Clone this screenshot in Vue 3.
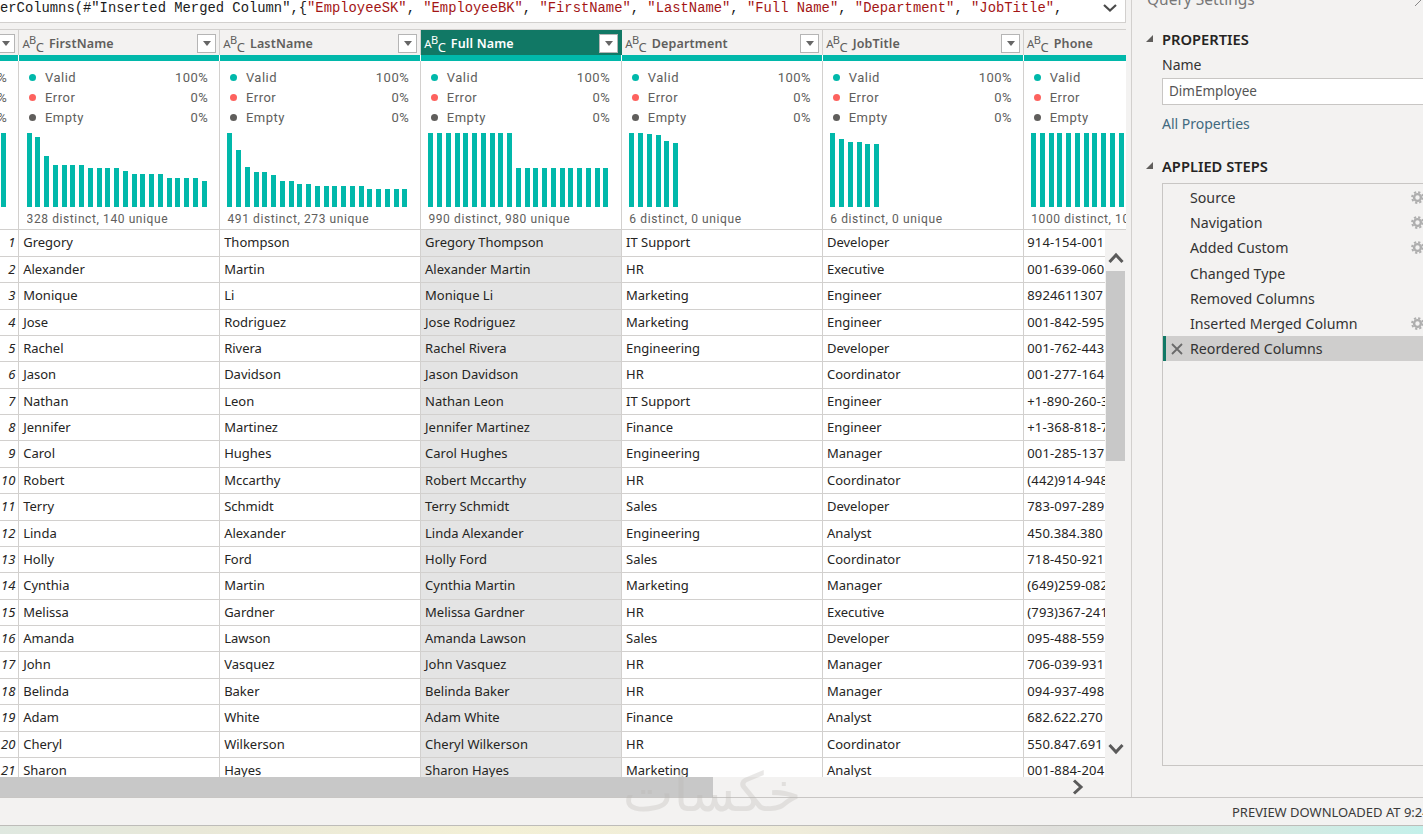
<script setup>
const repeat = (n, v) => Array(n).fill(v)
const columns = [
  { name: 'Prev', bars: repeat(21, 74), foot: '1000 distinct, 1000 unique', hidden: true },
  { name: 'FirstName', bars: [74,70,51,42,42,42,42,39,39,39,39,36,33,33,33,33,29,29,29,29,26], foot: '328 distinct, 140 unique' },
  { name: 'LastName', bars: [74,57,40,35,35,32,26,26,23,23,21,21,21,21,21,21,18,18,18,18,18], foot: '491 distinct, 273 unique' },
  { name: 'Full Name', bars: [...repeat(10, 74), ...repeat(11, 39)], foot: '990 distinct, 980 unique', selected: true },
  { name: 'Department', bars: [74,74,73,72,66,64], foot: '6 distinct, 0 unique' },
  { name: 'JobTitle', bars: [74,68,65,65,63,63], foot: '6 distinct, 0 unique' },
  { name: 'Phone', bars: repeat(21, 74), foot: '1000 distinct, 1000 unique', last: true }
]
const legend = [
  { label: 'Valid', value: '100%', color: '#01b8aa' },
  { label: 'Error', value: '0%', color: '#fd625e' },
  { label: 'Empty', value: '0%', color: '#605e5c' }
]
const rows = [
  ['Gregory','Thompson','IT Support','Developer','914-154-001'],
  ['Alexander','Martin','HR','Executive','001-639-060'],
  ['Monique','Li','Marketing','Engineer','8924611307'],
  ['Jose','Rodriguez','Marketing','Engineer','001-842-595'],
  ['Rachel','Rivera','Engineering','Developer','001-762-443'],
  ['Jason','Davidson','HR','Coordinator','001-277-164'],
  ['Nathan','Leon','IT Support','Engineer','+1-890-260-3'],
  ['Jennifer','Martinez','Finance','Engineer','+1-368-818-7'],
  ['Carol','Hughes','Engineering','Manager','001-285-137'],
  ['Robert','Mccarthy','HR','Coordinator','(442)914-948'],
  ['Terry','Schmidt','Sales','Developer','783-097-289'],
  ['Linda','Alexander','Engineering','Analyst','450.384.380'],
  ['Holly','Ford','Sales','Coordinator','718-450-921'],
  ['Cynthia','Martin','Marketing','Manager','(649)259-082'],
  ['Melissa','Gardner','HR','Executive','(793)367-241'],
  ['Amanda','Lawson','Sales','Developer','095-488-559'],
  ['John','Vasquez','HR','Manager','706-039-931'],
  ['Belinda','Baker','HR','Manager','094-937-498'],
  ['Adam','White','Finance','Analyst','682.622.270'],
  ['Cheryl','Wilkerson','HR','Coordinator','550.847.691'],
  ['Sharon','Hayes','Marketing','Analyst','001-884-204']
]
const steps = [
  { name: 'Source', gear: true },
  { name: 'Navigation', gear: true },
  { name: 'Added Custom', gear: true },
  { name: 'Changed Type' },
  { name: 'Removed Columns' },
  { name: 'Inserted Merged Column', gear: true },
  { name: 'Reordered Columns', active: true }
]
</script>

<template>
  <div class="app">
    <div class="main">
      <section class="left">
        <div class="formula">
          <code class="code">erColumns(#"Inserted Merged Column",{<b>"EmployeeSK"</b>, <b>"EmployeeBK"</b>, <b>"FirstName"</b>, <b>"LastName"</b>, <b>"Full Name"</b>, <b>"Department"</b>, <b>"JobTitle"</b>,</code>
          <svg class="formula-chev" width="16" height="10" viewBox="0 0 16 10"><path d="M2 2l6 5.5L14 2" fill="none" stroke="#4a4a4a" stroke-width="2.2"/></svg>
        </div>

        <div class="table">
          <div class="head cols">
            <div v-for="c in columns" :key="c.name" class="hcell" :class="{ sel: c.selected }">
              <span v-if="!c.hidden" class="abc"><i>A</i><i class="b">B</i><i class="c">C</i></span>
              <span v-if="!c.hidden" class="hname">{{ c.name }}</span>
              <span v-if="!c.last" class="drop"><span class="tri"></span></span>
            </div>
          </div>
          <div class="stripes cols">
            <div v-for="c in columns" :key="c.name" class="stripe"></div>
          </div>
          <div class="profile cols">
            <div v-for="c in columns" :key="c.name" class="pcell">
              <div class="legend">
                <div v-for="l in legend" :key="l.label" class="lrow">
                  <span class="dot" :style="{ background: l.color }"></span>
                  <span class="lname">{{ l.label }}</span>
                  <span class="lval">{{ l.value }}</span>
                </div>
              </div>
              <div class="bars">
                <span v-for="(h, i) in c.bars" :key="i" class="bar" :style="{ height: h + 'px' }"></span>
              </div>
              <div class="foot">{{ c.foot }}</div>
            </div>
          </div>

          <div class="body">
            <div class="rows">
              <div v-for="(r, i) in rows" :key="i" class="row cols">
                <div class="cell num">{{ i + 1 }}</div>
                <div class="cell">{{ r[0] }}</div>
                <div class="cell">{{ r[1] }}</div>
                <div class="cell selcell">{{ r[0] }} {{ r[1] }}</div>
                <div class="cell">{{ r[2] }}</div>
                <div class="cell">{{ r[3] }}</div>
                <div class="cell phone">{{ r[4] }}</div>
              </div>
            </div>
            <div class="vscroll">
              <svg class="vchev" width="16" height="12" viewBox="0 0 16 12"><path d="M1.5 10L8 3l6.500 7" fill="none" stroke="#5a5a5a" stroke-width="3"/></svg>
              <div class="vthumb"></div>
              <div class="vspace"></div>
              <svg class="vchev" width="16" height="12" viewBox="0 0 16 12"><path d="M1.500 2L8 9l6.500-7" fill="none" stroke="#5a5a5a" stroke-width="3"/></svg>
            </div>
          </div>
          <div class="hscroll">
            <div class="hthumb"></div>
            <svg class="hchev" width="12" height="16" viewBox="0 0 12 16"><path d="M2 1.500L9 8l-7 6.500" fill="none" stroke="#5a5a5a" stroke-width="3"/></svg>
          </div>
        </div>
      </section>

      <aside class="side">
        <div class="qs">Query Settings</div>
        <svg class="qs-x" width="8" height="8" viewBox="0 0 8 8"><path d="M0 6L6 0" stroke="#888" stroke-width="1"/></svg>
        <div class="sec-title first"><span class="caret"></span>PROPERTIES</div>
        <div class="name-label">Name</div>
        <div class="name-input">DimEmployee</div>
        <div class="all-props">All Properties</div>
        <div class="sec-title second"><span class="caret"></span>APPLIED STEPS</div>
        <div class="steps">
          <div v-for="s in steps" :key="s.name" class="step" :class="{ active: s.active }">
            <svg v-if="s.active" class="x" width="12" height="12" viewBox="0 0 12 12"><path d="M1 1l10 10M11 1L1 11" stroke="#6a6a6a" stroke-width="1.800"/></svg>
            <span class="step-name">{{ s.name }}</span>
            <svg v-if="s.gear" class="gear" width="13" height="13" viewBox="0 0 13 13">
              <circle cx="6.500" cy="6.500" r="3.400" fill="none" stroke="#aeaeae" stroke-width="2.400"/>
              <circle cx="6.500" cy="6.500" r="5.400" fill="none" stroke="#aeaeae" stroke-width="2" stroke-dasharray="2.240 2"/>
            </svg>
          </div>
        </div>
      </aside>
    </div>

    <footer class="status">
      <span class="status-text">PREVIEW DOWNLOADED AT 9:24 AM</span>
    </footer>
    <div class="strip"></div>
    <div class="watermark">خكسات</div>
  </div>
</template>

<style>
html, body { margin: 0; overflow: hidden; }
</style>

<style scoped>
.app {
  position: relative;
  width: 1423px;
  height: 834px;
  overflow: hidden;
  display: flex;
  flex-direction: column;
  background: #f3f2f1;
  font-family: "Noto Sans", "Open Sans", sans-serif;
  color: #252423;
}
.main { display: flex; height: 797px; flex: none; }
.left {
  width: 1131px;
  flex: none;
  border-right: 1px solid #d2d0ce;
  box-sizing: content-box;
  display: flex;
  flex-direction: column;
  overflow: hidden;
}
.formula {
  width: 1126px;
  height: 23px;
  flex: none;
  box-sizing: border-box;
  background: #fff;
  border-right: 1px solid #d2d0ce;
  border-bottom: 1px solid #d2d0ce;
  display: flex;
  align-items: center;
  justify-content: space-between;
  padding-right: 7px;
}
.code {
  font-family: "Liberation Mono", monospace;
  font-size: 13.84px;
  white-space: pre;
  color: #1b1b1b;
  margin-top: -10px;
  line-height: 16px;
  padding-top: 3px;
}
.code b { font-weight: 400; color: #a31515; }
.formula-chev { margin-top: -6px; }
.table {
  width: 1126px;
  margin-top: 6px;
  border-top: 1px solid #d2d0ce;
  display: flex;
  flex-direction: column;
  flex: 1;
  min-height: 0;
  overflow: hidden;
}
.cols { display: flex; margin-left: -181.55px; }
.head { height: 25px; flex: none; background: #f3f2f1; }
.hcell {
  width: 200.95px;
  flex: none;
  box-sizing: border-box;
  border-right: 1px solid #d2d0ce;
  display: flex;
  align-items: center;
  padding: 2px 3px 0 3px;
  color: #605e5c;
}
.hcell.sel { background: #117865; color: #fff; border-right-color: #117865; }
.abc {
  display: flex;
  width: 20px;
  height: 17px;
  font-family: "Noto Sans", sans-serif;
  font-size: 11.5px;
  line-height: 10px;
  flex: none;
}
.abc i { font-style: normal; align-self: center; width: 6.7px; }
.abc .b { align-self: flex-start; font-size: 11px; }
.abc .c { align-self: flex-end; font-size: 13px; }
.hname {
  margin-left: 6.6px;
  font-size: 12.5px;
  font-weight: 600;
  white-space: nowrap;
  letter-spacing: .15px;
}
.drop {
  margin-left: auto;
  width: 19px;
  height: 19px;
  box-sizing: border-box;
  background: #fff;
  border: 1px solid #b5b5b5;
  display: flex;
  align-items: center;
  justify-content: center;
  flex: none;
}
.tri {
  width: 0;
  height: 0;
  border-left: 4.5px solid transparent;
  border-right: 4.5px solid transparent;
  border-top: 5px solid #666;
}
.stripes { height: 6px; flex: none; background: #fff; }
.stripe {
  width: 200.95px;
  flex: none;
  box-sizing: border-box;
  background: #01b8aa;
  border-right: 1px solid #fff;
}
.profile { height: 168px; flex: none; background: #fff; border-bottom: 1px solid #d2d0ce; box-sizing: content-box; }
.pcell {
  width: 200.95px;
  flex: none;
  box-sizing: border-box;
  border-right: 1px solid #d2d0ce;
  padding: 6px 11px 0 7.17px;
  font-family: Roboto, sans-serif;
  color: #605e5c;
  display: flex;
  flex-direction: column;
}
.legend { height: 66px; flex: none; }
.lrow { display: flex; align-items: center; height: 20.2px; font-size: 13px; letter-spacing: .5px; }
.dot { width: 7px; height: 7px; border-radius: 50%; margin-left: 2.8px; flex: none; }
.lname { margin-left: 8.6px; }
.lval { margin-left: auto; }
.bars {
  width: 180px;
  height: 74px;
  flex: none;
  display: grid;
  grid-template-columns: repeat(21, 5px);
  justify-content: space-between;
  align-items: end;
}
.bar { background: #01b8aa; display: block; }
.foot {
  margin-top: 3px;
  font-size: 12px;
  line-height: 18px;
  white-space: nowrap;
  letter-spacing: .6px;
  overflow: hidden;
}
.body { display: flex; height: 547px; flex: none; }
.rows { width: 1105px; flex: none; overflow: hidden; background: #fff; padding-top: .4px; box-sizing: border-box; }
.row { height: 26.38px; box-sizing: border-box; border-bottom: 1px solid #d2d0ce; }
.cell {
  width: 200.95px;
  flex: none;
  box-sizing: border-box;
  border-right: 1px solid #d2d0ce;
  padding-left: 3.8px;
  font-size: 13px;
  line-height: 25px;
  white-space: nowrap;
  overflow: hidden;
}
.phone { letter-spacing: .15px; padding-left: 3.2px; }
.num { text-align: right; padding-right: 3px; font-style: italic; }
.selcell { background: #e4e4e4; }
.vscroll { width: 21px; flex: none; display: flex; flex-direction: column; align-items: center; background: #f3f2f1; }
.vchev { flex: none; margin-top: 22px; margin-bottom: 7px; }
.vthumb { width: 19px; height: 190px; background: #c8c8c8; flex: none; }
.vspace { flex: 1; }
.vspace + .vchev { margin: 0 0 22px; }
.hscroll { height: 20px; flex: none; background: #f3f2f1; display: flex; align-items: center; }
.hthumb { width: 713px; height: 100%; background: #c8c8c8; }
.hchev { margin-left: 359px; }

.side { flex: 1; min-width: 0; position: relative; padding-left: 30px; overflow: hidden; }
.qs {
  position: absolute;
  left: 15px;
  top: -11px;
  font-size: 15.5px;
  line-height: 20px;
  color: #777;
  white-space: nowrap;
}
.qs-x { position: absolute; right: 0; top: 0; }
.sec-title {
  position: relative;
  font-size: 14.7px;
  font-weight: 600;
  line-height: 20px;
  color: #252423;
  white-space: nowrap;
}
.sec-title.first { margin-top: 29px; }
.sec-title.second { margin-top: 22px; }
.caret {
  position: absolute;
  left: -16px;
  top: 6px;
  width: 0;
  height: 0;
  border-bottom: 7px solid #605e5c;
  border-left: 7px solid transparent;
}
.name-label { margin-top: 6px; font-size: 14px; line-height: 20px; color: #333; }
.name-input {
  margin-top: 3px;
  width: 280px;
  height: 27px;
  box-sizing: border-box;
  background: #fff;
  border: 1px solid #c8c6c4;
  padding-left: 6px;
  font-size: 13.5px;
  line-height: 25px;
  color: #555;
}
.all-props { margin-top: 9px; font-size: 14px; line-height: 20px; color: #41697f; }
.steps {
  margin-top: 7px;
  width: 280px;
  height: 583px;
  box-sizing: border-box;
  border: 1px solid #c8c6c4;
  padding-top: 1px;
}
.step {
  height: 25.2px;
  display: flex;
  align-items: center;
  padding-left: 27px;
  position: relative;
  font-size: 14.2px;
  white-space: nowrap;
}
.step.active {
  background: #cfcecd;
  border-left: 3px solid #117865;
  padding-left: 24px;
  margin-left: 0;
  box-sizing: border-box;
}
.step-name { color: #333; }
.x { position: absolute; left: 5px; top: 7px; }
.gear { position: absolute; left: 248px; top: 6px; }

.status {
  height: 28px;
  flex: none;
  box-sizing: border-box;
  border-top: 1px solid #c8c6c4;
  display: flex;
  align-items: center;
  padding-left: 1232px;
  white-space: nowrap;
  font-size: 13px;
  color: #3a3a3a;
}
.strip {
  flex: 1;
  box-sizing: border-box;
  border-top: 1px solid #bdbcb9;
  background: linear-gradient(90deg, #dfe8e0 0, #e9e8d8 200px, #f3f0d6 500px, #efecda 800px, #dfdfdb 1050px, #d9e8e0 1250px, #c4f0ea 1423px);
}
.watermark {
  position: absolute;
  left: 622px;
  top: 763px;
  width: 180px;
  text-align: center;
  font-family: "DejaVu Sans", sans-serif;
  font-size: 54px;
  line-height: 60px;
  color: #b9b6b2;
  opacity: .3;
  pointer-events: none;
  white-space: nowrap;
}
</style>
